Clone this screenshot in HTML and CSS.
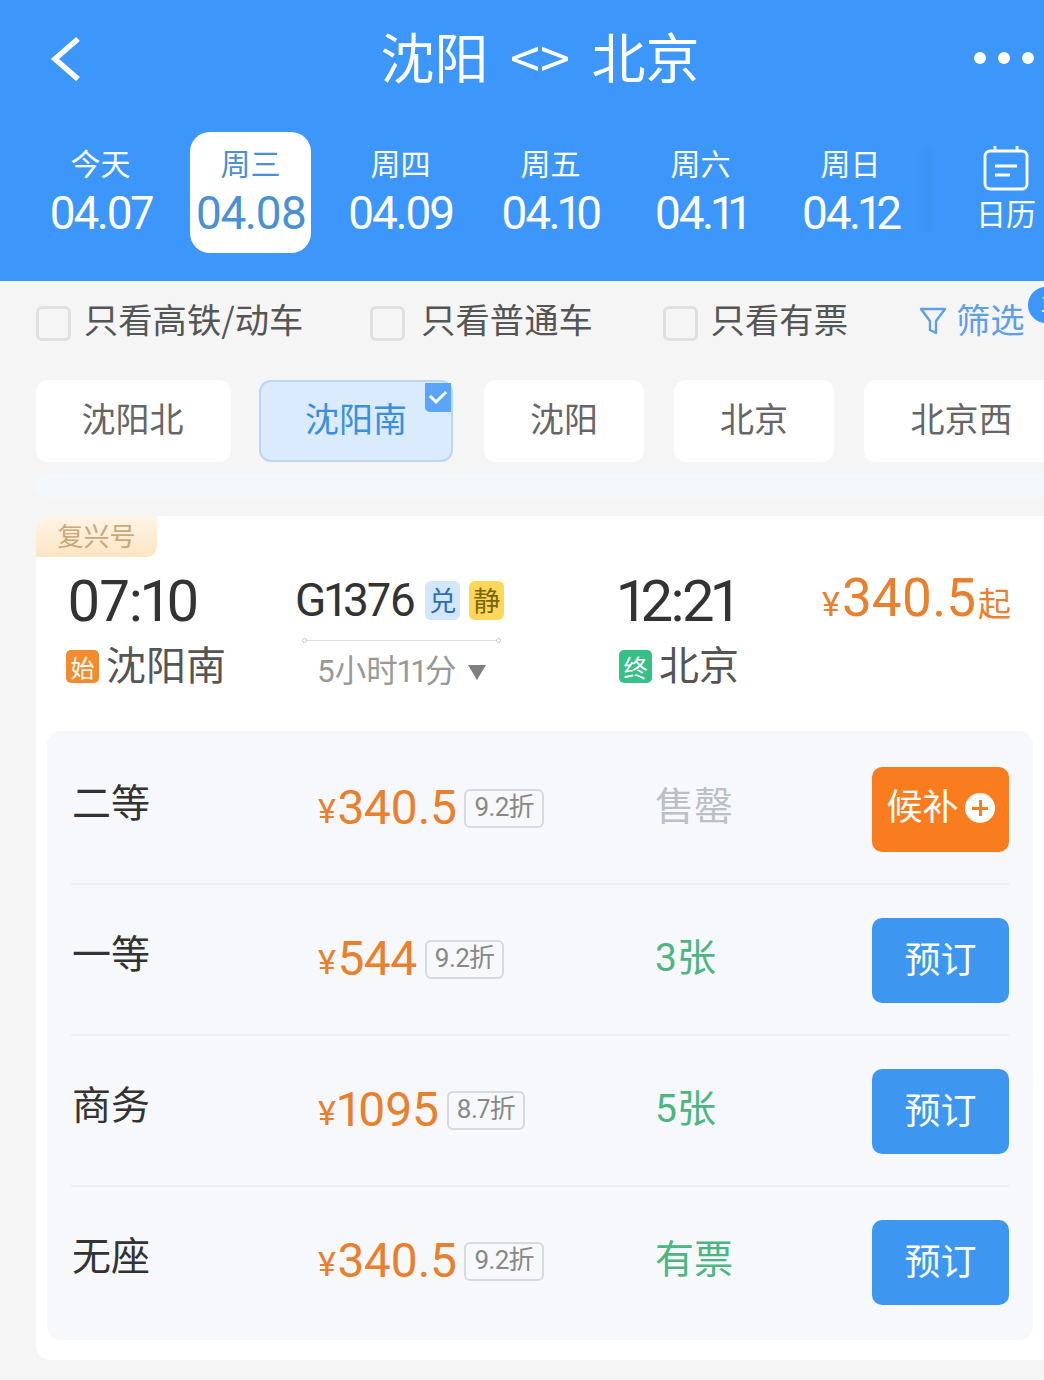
FILE: index.html
```html
<!DOCTYPE html>
<html lang="zh-CN">
  <head>
    <meta charset="UTF-8" />
    <meta name="viewport" content="width=device-width, initial-scale=1.0" />
    <title>沈阳 &lt;&gt; 北京</title>
    <link rel="stylesheet" href="styles.css">
  </head>
  <body>
    <header class="header">
      <div class="title-bar">
        <svg class="back-icon" width="32" height="44" viewBox="0 0 32 44">
          <path d="M28 2 L5 22 L28 42" fill="none" stroke="#fff" stroke-width="5.5" />
        </svg>
        <h1>沈阳 &lt;&gt; 北京</h1>
        <div class="more-dots"><i></i><i></i><i></i></div>
      </div>
      <div class="date-bar">
        <div class="day"><span class="week">今天</span><span class="date">04.07</span></div>
        <div class="day active"><span class="week">周三</span><span class="date">04.08</span></div>
        <div class="day"><span class="week">周四</span><span class="date">04.09</span></div>
        <div class="day"><span class="week">周五</span><span class="date">04.10</span></div>
        <div class="day"><span class="week">周六</span><span class="date">04.11</span></div>
        <div class="day"><span class="week">周日</span><span class="date">04.12</span></div>
        <div class="calendar">
          <svg width="46" height="46" viewBox="0 0 46 46">
            <rect x="2" y="6" width="42" height="38" rx="5" fill="none" stroke="#fff" stroke-width="2.8" />
            <path d="M12 1 V7 M34 1 V7 M12 21 H34 M12 30 H27" fill="none" stroke="#fff" stroke-width="2.8" />
          </svg>
          <span>日历</span>
        </div>
      </div>
    </header>

    <section class="filters">
      <label class="check"><i class="box"></i>只看高铁/动车</label>
      <label class="check second"><i class="box"></i>只看普通车</label>
      <label class="check third"><i class="box"></i>只看有票</label>
      <div class="filter-link">
        <svg width="28" height="30" viewBox="0 0 28 30">
          <path d="M2 3 H26 L17 15 V27 L11 24 V15 Z" fill="none" stroke="#5f9fe6" stroke-width="2.4" stroke-linejoin="round" />
        </svg>
        <span>筛选</span>
      </div>
      <span class="filter-count">1</span>
    </section>

    <section class="stations">
      <div class="station wide">沈阳北</div>
      <div class="station wide selected">
        沈阳南
        <span class="corner-check">
          <svg width="20" height="16" viewBox="0 0 20 16">
            <path d="M2 6 L8 12 L18 2" fill="none" stroke="#fff" stroke-width="3" />
          </svg>
        </span>
      </div>
      <div class="station">沈阳</div>
      <div class="station">北京</div>
      <div class="station last">北京西</div>
    </section>
    <div class="strip"></div>

    <section class="train-card">
      <span class="train-tag">复兴号</span>
      <div class="train-info">
        <div class="depart">
          <div class="time">07:10</div>
          <div class="stop"><b class="stop-mark start">始</b>沈阳南</div>
        </div>
        <div class="middle">
          <div class="train-no">G1376<b class="mark blue">兑</b><b class="mark yellow">静</b></div>
          <div class="route-line"></div>
          <div class="duration">5小时11分<i class="arrow"></i></div>
        </div>
        <div class="arrive">
          <div class="time">12:21</div>
          <div class="stop"><b class="stop-mark end">终</b>北京</div>
        </div>
        <div class="low-price"><small>¥</small>340.5<em>起</em></div>
      </div>

      <div class="seats">
        <div class="seat-row">
          <span class="seat-name">二等</span>
          <div class="seat-price"><small>¥</small>340.5<span class="discount">9.2折</span></div>
          <span class="seat-left soldout">售罄</span>
          <button type="button" class="book-btn wait"><span>候补</span><i class="plus"></i></button>
        </div>
        <div class="seat-row">
          <span class="seat-name">一等</span>
          <div class="seat-price"><small>¥</small>544<span class="discount">9.2折</span></div>
          <span class="seat-left">3张</span>
          <button type="button" class="book-btn"><span>预订</span></button>
        </div>
        <div class="seat-row">
          <span class="seat-name">商务</span>
          <div class="seat-price"><small>¥</small>1095<span class="discount">8.7折</span></div>
          <span class="seat-left">5张</span>
          <button type="button" class="book-btn"><span>预订</span></button>
        </div>
        <div class="seat-row">
          <span class="seat-name">无座</span>
          <div class="seat-price"><small>¥</small>340.5<span class="discount">9.2折</span></div>
          <span class="seat-left">有票</span>
          <button type="button" class="book-btn"><span>预订</span></button>
        </div>
      </div>
    </section>
  </body>
</html>
```

FILE: styles.css
```css
html,
body {
  margin: 0;
  height: 1380px;
  overflow: hidden;
}
body {
  position: relative;
  background-color: #f5f5f5;
  color: #333;
  font-family: Roboto, "Noto Sans CJK SC", sans-serif;
  font-variant-numeric: proportional-nums;
}

/* blue header */
.header {
  height: 281px;
  background-color: #3d97fb;
  color: #fff;
}
.title-bar {
  position: relative;
  height: 132px;
  display: flex;
  align-items: flex-start;
  justify-content: center;
}
.title-bar h1 {
  margin: 18px 0 0 36px;
  font-size: 54px;
  line-height: 76px;
  font-weight: 400;
  word-spacing: 9.5px;
  white-space: nowrap;
  font-family: "Noto Sans CJK SC", sans-serif;
}
.back-icon {
  position: absolute;
  left: 50px;
  top: 37px;
}
.more-dots {
  position: absolute;
  left: 974px;
  top: 52px;
  display: flex;
  gap: 12px;
}
.more-dots i {
  width: 12px;
  height: 12px;
  border-radius: 50%;
  background-color: #fff;
}

.date-bar {
  display: flex;
  padding-left: 40px;
}
.day {
  width: 121px;
  height: 121px;
  margin-right: 29px;
  border-radius: 20px;
  display: flex;
  flex-direction: column;
  align-items: center;
  padding-top: 12px;
  box-sizing: border-box;
}
.day.active {
  background-color: #fff;
  color: #4a90d4;
}
.week {
  font-size: 30px;
  line-height: 36px;
  font-family: "Noto Sans CJK SC", sans-serif;
}
.date {
  margin-top: 5px;
  font-size: 46px;
  line-height: 56px;
  letter-spacing: -2.5px;
  white-space: nowrap;
}
.day.active .date {
  letter-spacing: -1.6px;
}
.calendar {
  position: absolute;
  left: 915px;
  top: 148px;
  width: 129px;
  height: 84px;
  display: flex;
  flex-direction: column;
  align-items: center;
  padding-left: 53px;
  box-sizing: border-box;
  background: linear-gradient(90deg, #3d97fb 0, #3a92f3 16px, #3d97fb 18px);
}
.calendar svg {
  flex: none;
  margin-top: -3px;
}
.calendar span {
  font-size: 30px;
  line-height: 36px;
  margin-top: 3px;
  white-space: nowrap;
  font-family: "Noto Sans CJK SC", sans-serif;
}

/* filter row */
.filters {
  height: 99px;
  display: flex;
  align-items: flex-start;
  padding-left: 36px;
  color: #555;
  font-size: 34.3px;
  font-family: "Noto Sans CJK SC", sans-serif;
}
.check {
  display: flex;
  align-items: center;
  height: 50px;
  margin-top: 12px;
  white-space: nowrap;
}
.box {
  width: 35px;
  height: 35px;
  margin-right: 13px;
  margin-top: 11px;
  box-sizing: border-box;
  border: 3px solid #e0e0e0;
  border-radius: 6px;
}
.check.second {
  margin-left: 67px;
}
.check.second .box {
  margin-right: 16px;
}
.check.third {
  margin-left: 70px;
}
.filter-link {
  display: flex;
  align-items: center;
  height: 50px;
  margin: 12px 0 0 71px;
  gap: 9px;
  color: #5f9fe6;
  white-space: nowrap;
}
.filter-link svg {
  margin-top: 6px;
}
.filter-count {
  position: absolute;
  left: 1028px;
  top: 287px;
  width: 36px;
  height: 36px;
  border-radius: 50%;
  background-color: #3d97fb;
  color: #fff;
  font-size: 22px;
  line-height: 30px;
  text-align: center;
}

/* station chips */
.stations {
  display: flex;
  gap: 30px;
  padding-left: 36px;
  font-family: "Noto Sans CJK SC", sans-serif;
}
.station {
  position: relative;
  flex: none;
  width: 160px;
  height: 82px;
  border-radius: 12px;
  background-color: #fff;
  color: #666;
  font-size: 34px;
  line-height: 75px;
  text-align: center;
}
.station.wide {
  width: 195px;
  text-indent: -2px;
}
.station.last {
  width: 195px;
}
.station.selected {
  box-sizing: border-box;
  width: 194px;
  margin: 0 1px 0 -2px;
  line-height: 71px;
  text-indent: 0;
  background-color: #d9ebfd;
  border: 2px solid #bcd6ef;
  color: #3b8fdb;
}
.corner-check {
  position: absolute;
  top: 1px;
  right: 0;
  width: 26px;
  height: 29px;
  display: flex;
  align-items: center;
  justify-content: center;
  border-radius: 0 0 0 5px;
  background-color: #5aa5f8;
}
.strip {
  height: 23px;
  margin: 12px 0 19px 36px;
  border-radius: 10px 0 0 10px;
  background-color: #f3f8fd;
}

/* train card */
.train-card {
  position: relative;
  height: 844px;
  margin-left: 36px;
  border-radius: 14px 0 0 14px;
  background-color: #fff;
}
.train-tag {
  position: absolute;
  left: 0;
  top: 0;
  width: 121px;
  height: 41px;
  border-radius: 14px 0 10px 0;
  background: linear-gradient(180deg, #fdf5e8, #fde5c4);
  color: #c9a878;
  font-size: 26px;
  line-height: 37px;
  text-align: center;
  font-family: "Noto Sans CJK SC", sans-serif;
}
.train-info {
  display: flex;
  height: 215px;
  padding-left: 31px;
  align-items: flex-start;
}
.depart,
.arrive {
  padding-top: 49px;
}
.depart {
  width: 228px;
}
.arrive {
  width: 204px;
}
.time {
  font-size: 58px;
  line-height: 72px;
  color: #333;
  letter-spacing: -1px;
}
.arrive .time {
  margin-left: 1px;
  letter-spacing: -2.6px;
}
.stop {
  display: flex;
  align-items: center;
  margin: -2px 0 0 -1px;
  font-size: 40px;
  line-height: 56px;
  color: #555;
  font-family: "Noto Sans CJK SC", sans-serif;
}
.arrive .stop {
  margin-left: 2px;
}
.stop-mark {
  width: 33px;
  height: 33px;
  margin: 6px 7px 0 0;
  border-radius: 5px;
  color: #fff;
  font-size: 24px;
  line-height: 33px;
  font-weight: 400;
  text-align: center;
}
.stop-mark.start {
  background-color: #f28c2e;
}
.stop-mark.end {
  background-color: #36c088;
}
.middle {
  width: 322px;
  padding-top: 54px;
  box-sizing: border-box;
}
.train-no {
  display: flex;
  align-items: center;
  height: 60px;
  font-size: 46px;
  letter-spacing: -1.6px;
  color: #333;
}
.mark {
  width: 35px;
  height: 39px;
  margin-left: 9px;
  border-radius: 6px;
  font-size: 27px;
  line-height: 38px;
  font-weight: 400;
  letter-spacing: 0;
  text-align: center;
  font-family: "Noto Sans CJK SC", sans-serif;
}
.mark:first-of-type {
  margin-left: 11px;
}
.mark.blue {
  background-color: #d3e6fa;
  color: #2f6fb0;
}
.mark.yellow {
  background-color: #fcd75a;
  color: #7a6410;
}
.route-line {
  position: relative;
  width: 199px;
  height: 1px;
  margin: 10px 0 1px 7px;
  background-color: #ddd;
}
.route-line::before,
.route-line::after {
  content: "";
  position: absolute;
  top: -2px;
  width: 5px;
  height: 5px;
  box-sizing: border-box;
  border: 1px solid #ccc;
  border-radius: 50%;
  background-color: #fff;
}
.route-line::before {
  left: 0;
}
.route-line::after {
  right: 0;
}
.duration {
  display: flex;
  align-items: center;
  margin: 9px 0 0 22px;
  font-size: 31.5px;
  line-height: 44px;
  color: #999;
  white-space: nowrap;
}
.arrow {
  width: 0;
  height: 0;
  margin: 0 0 0 11px;
  border-left: 9px solid transparent;
  border-right: 9px solid transparent;
  border-top: 15px solid #808080;
}
.low-price {
  padding-top: 46px;
  margin-left: 1px;
  font-size: 53px;
  line-height: 72px;
  color: #e8802e;
  white-space: nowrap;
}
.low-price small {
  font-size: 34px;
  margin-right: 2px;
}
.low-price em {
  font-style: normal;
  font-size: 33px;
  margin-left: 2px;
  font-family: "Noto Sans CJK SC", sans-serif;
}

/* seat panel */
.seats {
  width: 986px;
  height: 609px;
  margin-left: 11px;
  padding: 3px 24px 0 24px;
  box-sizing: border-box;
  border-radius: 14px;
  background-color: #f6f8fb;
}
.seat-row {
  display: flex;
  align-items: center;
  height: 151px;
  box-sizing: border-box;
  border-bottom: 2px solid #eceef1;
}
.seat-row:last-child {
  border-bottom-color: transparent;
}
.seat-name {
  width: 247px;
  padding-left: 1px;
  box-sizing: border-box;
  margin-top: -18px;
  font-size: 39px;
  color: #333;
  font-family: "Noto Sans CJK SC", sans-serif;
}
.seat-price {
  display: flex;
  align-items: center;
  width: 337px;
  margin-top: -2px;
  font-size: 48px;
  letter-spacing: -0.5px;
  color: #e8802e;
  white-space: nowrap;
}
.seat-price small {
  font-size: 34px;
  margin: 6px 2px 0 0;
}
.discount {
  margin: 2px 0 0 8px;
  padding: 0 8px;
  height: 39px;
  box-sizing: border-box;
  border: 2px solid #d6d9dd;
  border-radius: 6px;
  font-size: 26px;
  line-height: 33px;
  color: #888;
  letter-spacing: -0.7px;
}
.seat-left {
  width: 217px;
  margin-top: -11px;
  font-size: 39px;
  color: #4cb582;
  white-space: nowrap;
}
.seat-left.soldout {
  color: #bcbfc3;
}
.book-btn {
  width: 137px;
  height: 85px;
  margin-top: 2px;
  border: none;
  border-radius: 10px;
  background-color: #3d97f0;
  color: #fff;
  font-size: 36px;
  padding: 0;
  display: flex;
  align-items: center;
  justify-content: center;
  font-family: "Noto Sans CJK SC", sans-serif;
}
.book-btn span {
  margin-top: -8px;
}
.book-btn.wait {
  background-color: #f97c1e;
  gap: 6px;
}
.book-btn.wait span {
  margin-top: -12px;
}
.plus {
  position: relative;
  width: 30px;
  height: 30px;
  margin-top: -3px;
  border-radius: 50%;
  background-color: #fff;
}
.plus::before,
.plus::after {
  content: "";
  position: absolute;
  background-color: #f97c1e;
}
.plus::before {
  left: 7px;
  top: 14px;
  width: 16px;
  height: 3px;
}
.plus::after {
  left: 14px;
  top: 7px;
  width: 3px;
  height: 16px;
}
```
